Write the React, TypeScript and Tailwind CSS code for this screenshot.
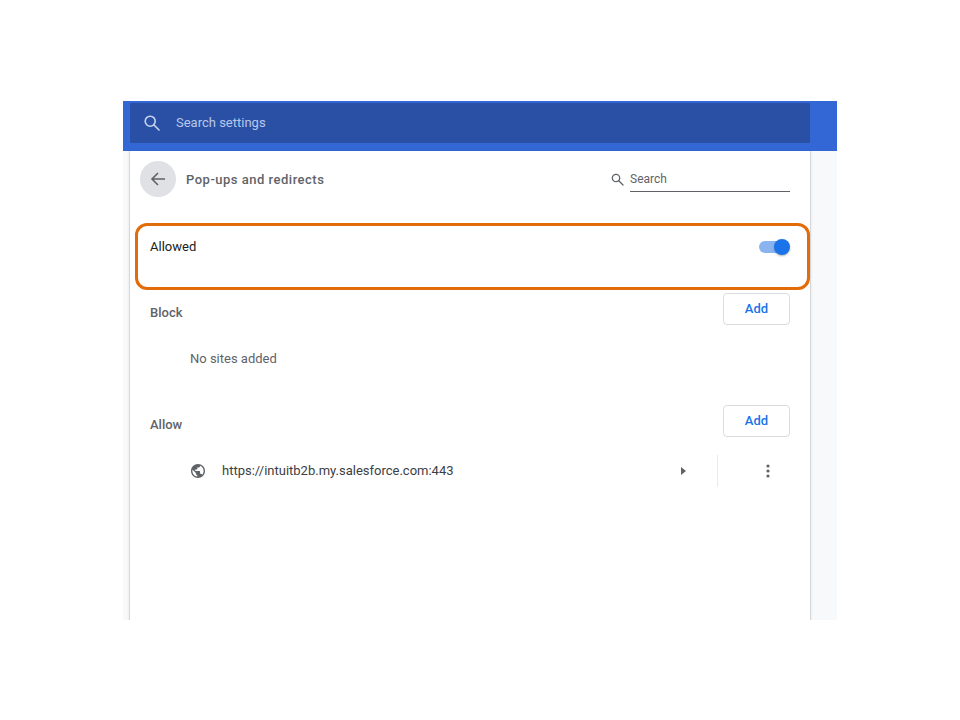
import React from "react";

function Add() {
  return (
    <button className="w-[67px] h-8 pb-[2px] rounded border border-[#dadce0] bg-white text-[13px] font-medium text-[#1a73e8] leading-none">
      Add
    </button>
  );
}

export default function App() {
  return (
    <div className="w-[960px] h-[720px] bg-white pt-[101px] pl-[123px] font-['Roboto',sans-serif]">
      <div className="relative w-[714px] h-[519px] overflow-hidden bg-[#f8f9fa] flex flex-col">
        <header className="h-[50px] shrink-0 bg-[#3367d6] pt-[2px] pl-[7px] pr-[27px]">
          <div className="h-10 rounded-[1px] bg-[#2a50a6] flex items-center pl-[13px]">
            <svg width="18" height="18" viewBox="0 0 18 18" fill="none" stroke="#c9d5f0" strokeWidth="1.6" strokeLinecap="round">
              <circle cx="7.2" cy="7.2" r="5" />
              <path d="M11 11l5 5" />
            </svg>
            <span className="ml-[15px] text-[13px] text-[#b9c8ea]">Search settings</span>
          </div>
        </header>
        <main className="ml-[6px] w-[682px] h-[480px] shrink-0 bg-white border-l border-r border-[#d6d8db] shadow-[0_0_2px_rgba(60,64,67,0.12)]">
          <div className="h-[56px] flex items-center pl-[10px] pr-5">
            <div className="w-9 h-9 rounded-full bg-[#dfe1e5] flex items-center justify-center">
              <svg width="16" height="16" viewBox="0 0 16 16" fill="none" stroke="#5f6368" strokeWidth="1.6">
                <path d="M15 8H2M8 2L2 8l6 6" />
              </svg>
            </div>
            <h1 className="ml-[10px] mt-[1px] text-[13px] font-medium text-[#5f6368] tracking-[0.5px]">Pop-ups and redirects</h1>
            <div className="ml-auto flex items-center">
              <svg width="13" height="13" viewBox="0 0 13 13" fill="none" stroke="#5f6368" strokeWidth="1.3" strokeLinecap="round" className="mr-[6px]">
                <circle cx="5" cy="5" r="3.7" />
                <path d="M8 8l4 4" />
              </svg>
              <div className="w-40 h-[26px] border-b border-[#5f6368] text-xs text-[#5f6368] leading-[27px]">Search</div>
            </div>
          </div>

          <section className="h-[64px] mt-[18px] pl-5 pr-5 pt-[13px] flex items-start justify-between">
            <span className="text-[13px] leading-[18px] text-[#202124]">Allowed</span>
            <span className="relative block w-[31px] h-[18px]">
              <span className="absolute left-0 right-[2px] top-[3px] h-3 rounded-full bg-[#8ab4f0]"></span>
              <span className="absolute right-0 top-[1px] w-4 h-4 rounded-full bg-[#1a73e8] shadow-[0_1px_2px_rgba(60,64,67,0.4)]"></span>
            </span>
          </section>

          <section className="h-[32px] mt-[4px] pl-5 pr-5 flex items-center justify-between">
            <h2 className="text-[13px] font-medium text-[#5f6368] mt-[7px]">Block</h2>
            <Add />
          </section>
          <p className="mt-[25px] pl-[60px] text-[13px] leading-[18px] text-[#5f6368]">No sites added</p>

          <section className="h-[32px] mt-[37px] pl-5 pr-5 flex items-center justify-between">
            <h2 className="text-[13px] font-medium text-[#5f6368] mt-[7px]">Allow</h2>
            <Add />
          </section>

          <div className="mt-[18px] h-[32px] pl-[61px] flex items-center">
            <svg width="14" height="14" viewBox="2 2 20 20" fill="#5f6368">
              <path d="M12 2C6.48 2 2 6.48 2 12s4.48 10 10 10 10-4.48 10-10S17.52 2 12 2zm-1 17.93c-3.95-.49-7-3.85-7-7.93 0-.62.08-1.21.21-1.79L9 15v1c0 1.1.9 2 2 2v1.93zm6.9-2.54c-.26-.81-1-1.39-1.9-1.39h-1v-3c0-.55-.45-1-1-1H8v-2h2c.55 0 1-.45 1-1V7h2c1.1 0 2-.9 2-2v-.41c2.93 1.19 5 4.06 5 7.41 0 2.08-.8 3.97-2.1 5.39z" />
            </svg>
            <span className="ml-[17px] text-[13px] text-[#3c4043]">https://intuitb2b.my.salesforce.com:443</span>
            <svg width="5" height="8" viewBox="0 0 5 8" fill="#5f6368" className="ml-[227px]">
              <path d="M0 0l5 4-5 4z" />
            </svg>
            <div className="ml-[31px] w-px h-8 bg-[#e8eaed]"></div>
            <svg width="4" height="14" viewBox="0 0 4 14" fill="#5f6368" className="ml-[48px]">
              <circle cx="2" cy="2" r="1.6" />
              <circle cx="2" cy="7" r="1.6" />
              <circle cx="2" cy="12" r="1.6" />
            </svg>
          </div>
        </main>
        <div className="absolute left-[12px] top-[122px] w-[675px] h-[67px] rounded-xl border-[3px] border-[#e36c0a] pointer-events-none"></div>
      </div>
    </div>
  );
}
